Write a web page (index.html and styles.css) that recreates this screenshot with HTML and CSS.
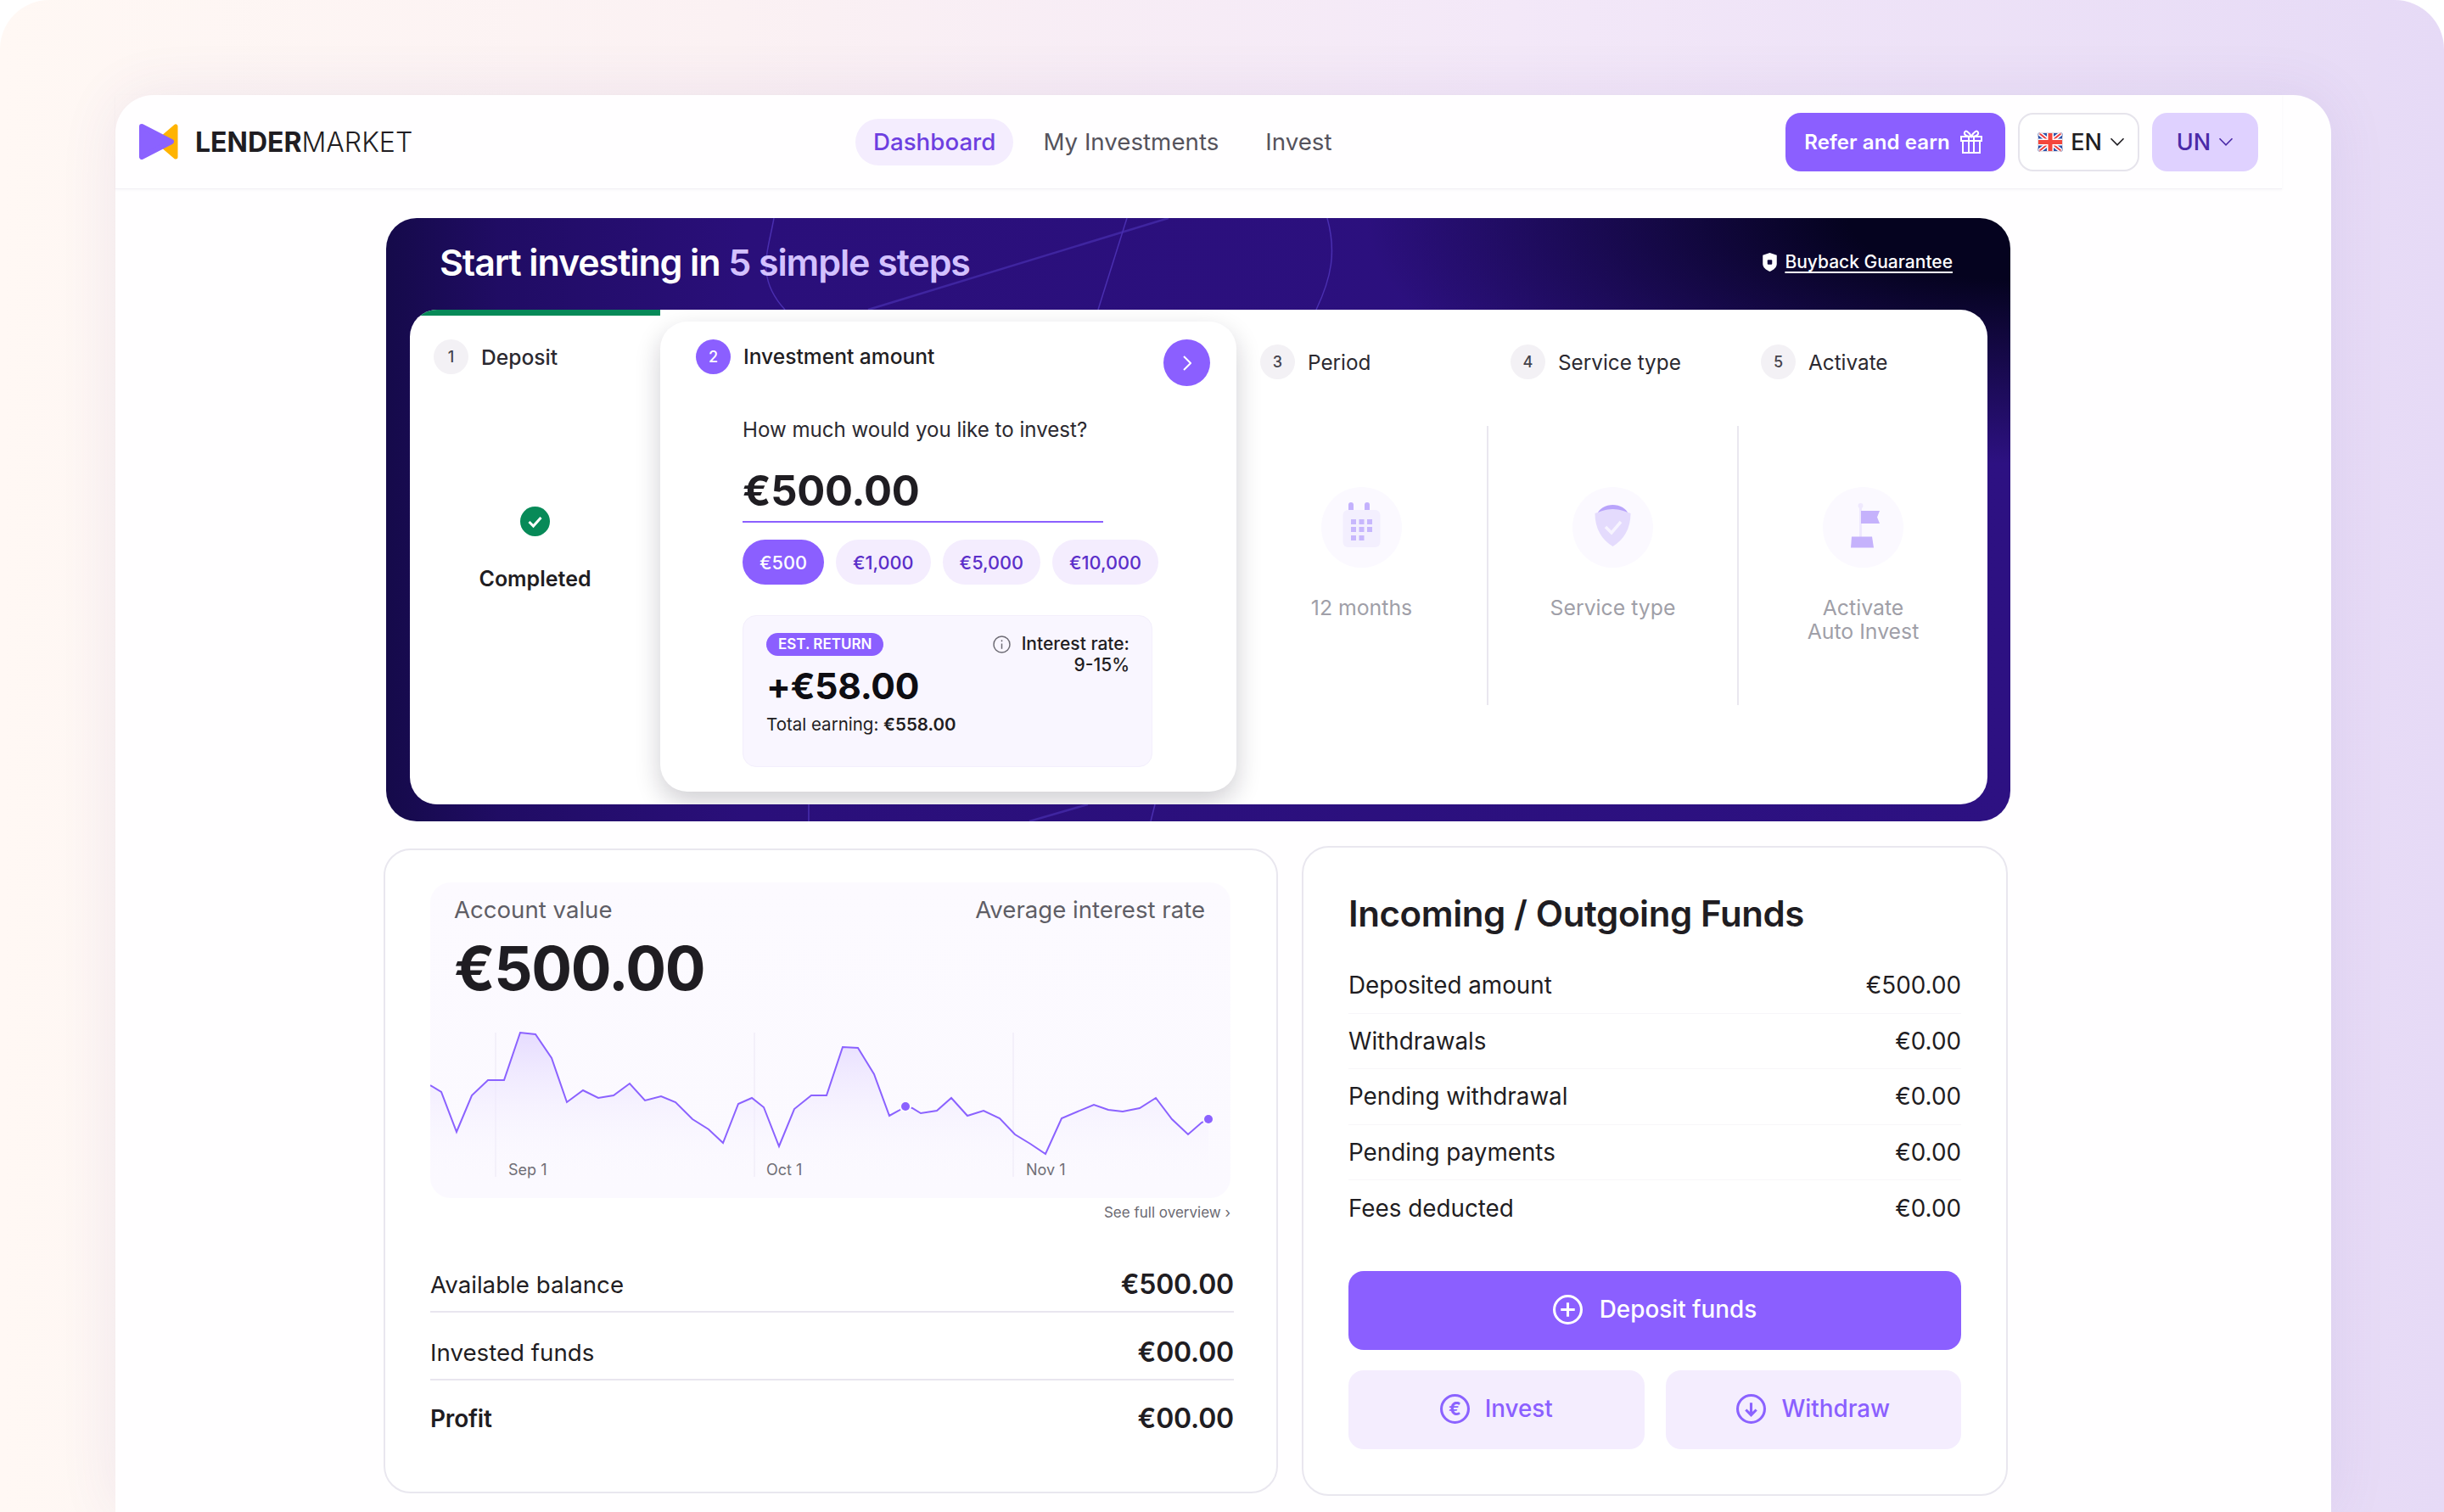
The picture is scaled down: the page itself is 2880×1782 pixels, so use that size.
FILE: index.html
```html
<!DOCTYPE html>
<html lang="en">
<head>
    <meta name="viewport" content="width=device-width, initial-scale=1.0">
    <link rel="stylesheet" href="styles.css">
    <title>Dashboard</title>
</head>

<body>
    <div class="frame">
        <div class="window">
            <header class="topbar">
                <div class="logo">
                    <svg class="logo-mark" viewBox="0 0 46 42">
                        <polygon points="43,3 43,39 22,21" fill="#ffb300" stroke="#ffb300" stroke-width="5" stroke-linejoin="round"/>
                        <polygon points="3,3 38,21 3,39" fill="#8b62ff" stroke="#8b62ff" stroke-width="6" stroke-linejoin="round"/>
                    </svg>
                    <span class="logo-text"><b>LENDER</b>MARKET</span>
                </div>
                <nav class="nav">
                    <a class="nav-link nav-active" href="#">Dashboard</a>
                    <a class="nav-link" href="#">My Investments</a>
                    <a class="nav-link nav-last" href="#">Invest</a>
                </nav>
                <div class="actions">
                    <button class="btn-refer">Refer and earn
                        <svg class="gift" viewBox="0 0 26 28" fill="none" stroke="#fff" stroke-width="2">
                            <rect x="1" y="8" width="24" height="5"/>
                            <rect x="3" y="13" width="20" height="14"/>
                            <path d="M10 8v19M16 8v19"/>
                            <path d="M13 8C10 2 6 0 5 3s3 5 8 5c5 0 9-2 8-5s-5-1-8 5z"/>
                        </svg>
                    </button>
                    <button class="btn-lang">
                        <svg class="flag" viewBox="0 0 30 23">
                            <rect width="30" height="23" rx="4" fill="#2a4fa8"/>
                            <path d="M2 1l26 21M28 1L2 22" stroke="#fff" stroke-width="5"/>
                            <path d="M2 1l26 21M28 1L2 22" stroke="#ee3d3d" stroke-width="2"/>
                            <path d="M15 0v23M0 11.5h30" stroke="#fff" stroke-width="8"/>
                            <path d="M15 0v23M0 11.5h30" stroke="#f4463c" stroke-width="5"/>
                            <rect x="0.5" y="0.5" width="29" height="22" rx="4" fill="none" stroke="#dddbe2"/>
                        </svg>
                        EN
                        <svg class="chev" viewBox="0 0 14 8" fill="none" stroke="#1f1d22" stroke-width="1.3"><path d="M1 1l6 6 6-6"/></svg>
                    </button>
                    <button class="btn-user">UN
                        <svg class="chev" viewBox="0 0 14 8" fill="none" stroke="#4a2aa8" stroke-width="1.3"><path d="M1 1l6 6 6-6"/></svg>
                    </button>
                </div>
            </header>

            <section class="hero">
                <svg class="hero-lines" viewBox="0 0 1914 711" fill="none" stroke="#4a2fb0" stroke-width="1.5">
                    <path d="M457 0C450 40 435 70 470 108"/>
                    <path d="M922 0L568 108" stroke="#3f25a0" stroke-width="2.500"/>
                    <path d="M873 0L839 108"/>
                    <path d="M1109 0C1120 40 1114 70 1096 108"/>
                    <path d="M498 691v20"/>
                    <path d="M827 691L758 711" stroke="#3f25a0" stroke-width="2.500"/>
                    <path d="M906 691l-5 20"/>
                </svg>
                <div class="hero-head">
                    <h1 class="hero-title">Start investing in <span class="hero-accent">5 simple steps</span></h1>
                    <a class="guarantee" href="#">
                        <svg class="guarantee-icon" viewBox="0 0 18 24">
                            <path d="M9 0l9 3v11c0 5-4 8-9 10-5-2-9-5-9-10V3z" fill="#fff"/>
                            <rect x="6" y="9" width="6" height="6" rx="1" fill="#120a3c"/>
                        </svg>
                        <span class="guarantee-text">Buyback Guarantee</span>
                    </a>
                </div>

                <div class="steps">
                    <div class="step step-done">
                        <div class="step-head"><span class="step-num">1</span>Deposit</div>
                        <svg class="check" viewBox="0 0 35 35">
                            <circle cx="17.5" cy="17.5" r="17.5" fill="#078a58"/>
                            <path d="M10.5 18l5 5 9-10" fill="none" stroke="#fff" stroke-width="3"/>
                        </svg>
                        <div class="completed">Completed</div>
                    </div>

                    <div class="step-card">
                        <div class="card-head">
                            <span class="step-num step-num-active">2</span>
                            <span class="card-title">Investment amount</span>
                            <button class="next">
                                <svg class="next-icon" viewBox="0 0 10 18" fill="none" stroke="#fff" stroke-width="2"><path d="M1 1l8 8-8 8"/></svg>
                            </button>
                        </div>
                        <div class="card-body">
                            <div class="question">How much would you like to invest?</div>
                            <div class="amount">€500.00</div>
                            <div class="chips">
                                <span class="chip chip-active">€500</span>
                                <span class="chip">€1,000</span>
                                <span class="chip">€5,000</span>
                                <span class="chip">€10,000</span>
                            </div>
                            <div class="return-box">
                                <div>
                                    <span class="badge">EST. RETURN</span>
                                    <div class="return-value">+€58.00</div>
                                    <div class="return-total">Total earning: <b>€558.00</b></div>
                                </div>
                                <div class="rate">
                                    <svg class="info" viewBox="0 0 20 20" fill="none" stroke="#6d6b74" stroke-width="1.4">
                                        <circle cx="10" cy="10" r="9"/>
                                        <path d="M10 9v6M10 5v2"/>
                                    </svg>
                                    Interest rate:<br>9-15%
                                </div>
                            </div>
                        </div>
                    </div>

                    <div class="step step-todo">
                        <div class="step-head"><span class="step-num">3</span>Period</div>
                        <div class="todo-body">
                            <svg class="todo-icon" viewBox="0 0 95 95">
                                <circle cx="47.5" cy="47.5" r="47.5" fill="#fbf9ff"/>
                                <rect x="32" y="18" width="6" height="14" rx="3" fill="#c4b2fd"/>
                                <rect x="51" y="18" width="6" height="14" rx="3" fill="#c4b2fd"/>
                                <rect x="25.500" y="27" width="44" height="44" rx="6" fill="#f3effe"/>
                                <g fill="#c7b7fd">
                                    <rect x="35" y="38" width="6" height="6"/><rect x="44.500" y="38" width="6" height="6"/><rect x="54" y="38" width="6" height="6"/>
                                    <rect x="35" y="47" width="6" height="6"/><rect x="44.500" y="47" width="6" height="6"/><rect x="54" y="47" width="6" height="6"/>
                                    <rect x="35" y="57" width="6" height="6"/><rect x="44.500" y="57" width="6" height="6"/>
                                </g>
                            </svg>
                            <div class="todo-text">12 months</div>
                        </div>
                    </div>

                    <div class="step step-todo">
                        <div class="step-head"><span class="step-num">4</span>Service type</div>
                        <div class="todo-body todo-line">
                            <svg class="todo-icon" viewBox="0 0 95 95">
                                <circle cx="47.5" cy="47.5" r="47.5" fill="#fbf9ff"/>
                                <path d="M28.500 33C34 17 61 17 66.500 33z" fill="#b9a4fb"/>
                                <path d="M47.500 26c8 0 15 3 21 5 0 18-8 31-21 39-13-8-21-21-21-39 6-2 13-5 21-5z" fill="#e4dbfd"/>
                                <path d="M39 47l7 7 11-13" fill="none" stroke="#f7f4ff" stroke-width="3.500"/>
                            </svg>
                            <div class="todo-text">Service type</div>
                        </div>
                    </div>

                    <div class="step step-todo">
                        <div class="step-head"><span class="step-num">5</span>Activate</div>
                        <div class="todo-body todo-line">
                            <svg class="todo-icon" viewBox="0 0 95 95">
                                <circle cx="47.5" cy="47.5" r="47.5" fill="#fbf9ff"/>
                                <rect x="43" y="22" width="3" height="38" fill="#efe9fe"/>
                                <circle cx="44.500" cy="22" r="3" fill="#efe9fe"/>
                                <path d="M45 28h22l-3 7.500 3 7.500H45z" fill="#c5b2fc"/>
                                <path d="M34 58.500h24l2 13H33z" fill="#c5b2fc"/>
                            </svg>
                            <div class="todo-text">Activate<br>Auto Invest</div>
                        </div>
                    </div>
                </div>
            </section>

            <div class="cards">
                <section class="card card-left">
                    <div class="chart-panel">
                        <div class="chart-labels">
                            <span>Account value</span>
                            <span>Average interest rate</span>
                        </div>
                        <div class="chart-value">€500.00</div>
                        <svg class="chart" viewBox="0 0 942 370">
                            <defs>
                                <linearGradient id="area" x1="0" y1="175" x2="0" y2="345" gradientUnits="userSpaceOnUse">
                                    <stop offset="0" stop-color="#e6dcff"/>
                                    <stop offset="1" stop-color="#fbf9ff" stop-opacity="0"/>
                                </linearGradient>
                            </defs>
                            <path d="M77 175v170M382 175v170M687 175v170" stroke="#f1edf9" stroke-width="1.5"/>
                            <polygon fill="url(#area)" points="0,345 0,237 13,245 31,292 49,249 68,231 87,231 106,175 124,177 143,205 161,257 180,243 198,252 216,249 235,235 253,255 272,250 289,257 309,277 328,289 345,305 363,259 379,252 393,263 411,309 429,265 449,249 467,249 486,192 504,193 523,224 541,273 552,267 560,262 568,264 578,270 597,267 614,252 633,273 652,267 671,276 689,295 707,306 725,318 744,276 782,260 799,266 816,268 836,264 855,252 874,277 893,295 909,281 917,277 917,345"/>
                            <polyline fill="none" stroke="#8b62ff" stroke-width="2" points="0,237 13,245 31,292 49,249 68,231 87,231 106,175 124,177 143,205 161,257 180,243 198,252 216,249 235,235 253,255 272,250 289,257 309,277 328,289 345,305 363,259 379,252 393,263 411,309 429,265 449,249 467,249 486,192 504,193 523,224 541,273 552,267 560,262 568,264 578,270 597,267 614,252 633,273 652,267 671,276 689,295 707,306 725,318 744,276 782,260 799,266 816,268 836,264 855,252 874,277 893,295 909,281 917,277"/>
                            <circle cx="560" cy="262" r="5" fill="#8b62ff" stroke="#fcfaff" stroke-width="4" paint-order="stroke"/>
                            <circle cx="917" cy="277" r="5" fill="#8b62ff" stroke="#fcfaff" stroke-width="4" paint-order="stroke"/>
                            <text class="tick" x="92" y="343">Sep 1</text>
                            <text class="tick" x="396" y="343">Oct 1</text>
                            <text class="tick" x="702" y="343">Nov 1</text>
                        </svg>
                    </div>
                    <a class="overview" href="#">See full overview ›</a>
                    <div class="sum-row"><span>Available balance</span><b>€500.00</b></div>
                    <div class="sum-row"><span>Invested funds</span><b>€00.00</b></div>
                    <div class="sum-row sum-last"><b>Profit</b><b>€00.00</b></div>
                </section>

                <section class="card card-right">
                    <h2 class="funds-title">Incoming / Outgoing Funds</h2>
                    <div class="fund-row"><span>Deposited amount</span><span>€500.00</span></div>
                    <div class="fund-row"><span>Withdrawals</span><span>€0.00</span></div>
                    <div class="fund-row"><span>Pending withdrawal</span><span>€0.00</span></div>
                    <div class="fund-row"><span>Pending payments</span><span>€0.00</span></div>
                    <div class="fund-row fund-last"><span>Fees deducted</span><span>€0.00</span></div>
                    <button class="btn-deposit">
                        <svg class="btn-icon" viewBox="0 0 34 34" fill="none" stroke="#fff" stroke-width="3">
                            <circle cx="17" cy="17" r="15.500"/>
                            <path d="M17 9v16M9 17h16"/>
                        </svg>
                        Deposit funds
                    </button>
                    <div class="btn-pair">
                        <button class="btn-soft">
                            <svg class="btn-icon" viewBox="0 0 34 34" fill="none" stroke="#8b62ff" stroke-width="3">
                                <circle cx="17" cy="17" r="15.500"/>
                                <text class="euro" x="17" y="24.500" text-anchor="middle">€</text>
                            </svg>
                            Invest
                        </button>
                        <button class="btn-soft">
                            <svg class="btn-icon" viewBox="0 0 34 34" fill="none" stroke="#8b62ff" stroke-width="3">
                                <circle cx="17" cy="17" r="15.500"/>
                                <path d="M17 10v13M11 18l6 6 6-6"/>
                            </svg>
                            Withdraw
                        </button>
                    </div>
                </section>
            </div>
        </div>
    </div>
</body>

</html>
```

FILE: styles.css
```css
* {
    box-sizing: border-box;
}

body {
    font-family: Inter, "Noto Sans", sans-serif;
    margin: 0;
    padding: 0;
    background-color: #fff;
    color: #1f1d22;
    overflow: hidden;
}

h1,
h2 {
    margin: 0;
}

a {
    color: inherit;
    text-decoration: none;
}

button {
    font-family: inherit;
    border: none;
    cursor: pointer;
}

.frame {
    height: 1782px;
    padding: 112px 133px 0 136px;
    border-radius: 58px 58px 0 0;
    background: linear-gradient(90deg, #fff8f4 0%, #fbf1f3 30%, #f3e8f8 62%, #e6daf6 100%);
    overflow: hidden;
}

.window {
    height: 1670px;
    background-color: #fffeff;
    border-radius: 45px 45px 0 0;
    box-shadow: 0 0 70px rgba(90, 50, 150, 0.09);
}

/* top bar */
.topbar {
    display: flex;
    align-items: center;
    width: 2553px;
    height: 111px;
    padding: 0 28px 0 28px;
    border-bottom: 1px solid #f2f0f5;
    box-shadow: 0 1px 3px rgba(60, 40, 100, 0.04);
}

.logo {
    display: flex;
    align-items: center;
    width: 844px;
}

.logo-mark {
    width: 46px;
    height: 42px;
    margin-right: 20px;
}

.logo-text {
    font-size: 32px;
    font-weight: 300;
}

.logo-text b {
    font-weight: 700;
}

.nav {
    display: flex;
    align-items: center;
    gap: 35px;
}

.nav-link {
    font-size: 27.7px;
    color: #55535c;
    line-height: 55px;
}

.nav-last {
    margin-left: 20px;
}

.nav-active {
    padding: 0 21px;
    border-radius: 28px;
    color: #6d3fe0;
    font-weight: 500;
    background-color: #f4edfe;
}

.actions {
    display: flex;
    align-items: center;
    gap: 15px;
    margin-left: auto;
}

.btn-refer {
    display: flex;
    align-items: center;
    justify-content: center;
    gap: 12px;
    width: 259px;
    height: 69px;
    padding: 0 5px 0 0;
    border-radius: 18px;
    font-size: 24px;
    font-weight: 600;
    letter-spacing: 0.1px;
    color: #fff;
    background-color: #8b5fff;
}

.gift {
    width: 26px;
    height: 28px;
}

.btn-lang {
    display: flex;
    align-items: center;
    justify-content: center;
    gap: 9px;
    width: 143px;
    height: 69px;
    padding: 0 0 0 6px;
    border: 2px solid #e6e4ec;
    border-radius: 18px;
    font-size: 27px;
    font-weight: 500;
    color: #1f1d22;
    background-color: #fff;
}

.flag {
    width: 30px;
    height: 23px;
}

.chev {
    width: 18px;
    height: 10px;
}

.btn-user {
    display: flex;
    align-items: center;
    justify-content: center;
    gap: 9px;
    width: 125px;
    height: 69px;
    padding: 0;
    border-radius: 18px;
    font-size: 27px;
    font-weight: 500;
    color: #4a2aa8;
    background-color: #dfd1ff;
}

/* hero */
.hero {
    position: relative;
    width: 1914px;
    height: 711px;
    margin: 34px 0 0 319px;
    border-radius: 36px;
    background:
        radial-gradient(ellipse 760px 290px at 100% 0, #05031f 0%, #05031f 25%, rgba(5, 3, 31, 0) 100%),
        linear-gradient(90deg, #150a4a 0%, #200c64 7%, #2a0f7a 22%, #2d1182 100%);
    overflow: hidden;
}

.hero-lines {
    position: absolute;
    left: 0;
    top: 0;
    width: 1914px;
    height: 711px;
}

.hero-head {
    position: relative;
    display: flex;
    align-items: center;
    justify-content: space-between;
    height: 108px;
    padding: 0 68px 5px 63px;
}

.hero-title {
    font-size: 43px;
    font-weight: 600;
    letter-spacing: -1.1px;
    color: #fff;
}

.hero-accent {
    color: #d3c1ff;
}

.guarantee {
    display: flex;
    align-items: center;
    gap: 9px;
    color: #fff;
    font-size: 21px;
    font-weight: 500;
}

.guarantee-icon {
    width: 17px;
    height: 22px;
}

.guarantee-text {
    text-decoration: underline;
    text-underline-offset: 4px;
}

.steps {
    position: relative;
    display: flex;
    width: 1859px;
    height: 583px;
    margin-left: 28px;
    border-radius: 32px;
    background-color: #fff;
    overflow: hidden;
}

.step {
    flex: 1;
}

.step-done {
    flex: 0 0 295px;
    padding-top: 28px;
    border-top: 7px solid #078a58;
    text-align: center;
}

.step-head {
    display: flex;
    align-items: center;
    height: 41px;
    padding-left: 28px;
    font-size: 24.6px;
    font-weight: 500;
    color: #2b2930;
}

.step-todo .step-head {
    margin-top: 41px;
    font-size: 24.3px;
    font-weight: 400;
}

.step-num {
    display: flex;
    align-items: center;
    justify-content: center;
    flex: none;
    width: 41px;
    height: 41px;
    margin-right: 15px;
    border-radius: 50%;
    font-size: 18px;
    font-weight: 500;
    color: #45434c;
    background-color: #f3f1f5;
}

.step-num-active {
    color: #fff;
    background-color: #8b5fff;
}

.check {
    display: block;
    width: 35px;
    height: 35px;
    margin: 156px auto 0;
}

.completed {
    margin-top: 33px;
    font-size: 25px;
    line-height: 34px;
    font-weight: 600;
}

.step-card {
    flex: 0 0 679px;
    height: 554px;
    margin-top: 14px;
    border-radius: 32px;
    background-color: #fff;
    box-shadow: 0 12px 30px rgba(20, 15, 35, 0.2);
    z-index: 1;
}

.card-head {
    display: flex;
    align-items: flex-start;
    padding: 21px 31px 0 42px;
}

.card-title {
    line-height: 41px;
    font-size: 24.6px;
    font-weight: 500;
}

.next {
    display: flex;
    align-items: center;
    justify-content: center;
    width: 55px;
    height: 55px;
    margin: 0 0 0 auto;
    padding: 0;
    border-radius: 50%;
    background-color: #8b5fff;
}

.next-icon {
    width: 10px;
    height: 18px;
}

.card-body {
    padding-left: 97px;
    margin-top: 36px;
}

.question {
    font-size: 24.1px;
    line-height: 32px;
    color: #2b2930;
}

.amount {
    width: 425px;
    margin-top: 20px;
    font-size: 49px;
    line-height: 71px;
    font-weight: 700;
    letter-spacing: -0.3px;
    border-bottom: 2px solid #8b5fff;
}

.chips {
    display: flex;
    gap: 14px;
    margin-top: 20px;
}

.chip {
    display: flex;
    align-items: center;
    height: 53px;
    padding: 0 20px;
    border-radius: 27px;
    font-size: 21.7px;
    font-weight: 500;
    color: #5b2fc9;
    background-color: #f4edfe;
}

.chip-active {
    color: #fff;
    background-color: #8b5fff;
}

.return-box {
    display: flex;
    justify-content: space-between;
    width: 483px;
    height: 179px;
    margin-top: 36px;
    padding: 20px 26px 0 27px;
    border-radius: 16px;
    border: 1px solid #f3effc;
    background-color: #f9f6ff;
}

.badge {
    display: inline-block;
    height: 27px;
    padding: 0 14px;
    line-height: 27px;
    border-radius: 14px;
    font-size: 17px;
    font-weight: 600;
    color: #fff;
    background-color: #8b5fff;
}

.return-value {
    margin-top: 6px;
    font-size: 42.500px;
    line-height: 60px;
    font-weight: 700;
    letter-spacing: -0.3px;
    color: #0e0d12;
}

.return-total {
    font-size: 20.5px;
    line-height: 30px;
}

.return-total b {
    font-weight: 600;
}

.rate {
    font-size: 21px;
    line-height: 25px;
    font-weight: 500;
    text-align: right;
}

.info {
    display: inline-block;
    width: 21px;
    height: 21px;
    margin-right: 7px;
    vertical-align: -4px;
}

.todo-body {
    display: flex;
    flex-direction: column;
    align-items: center;
    height: 329px;
    margin-top: 55px;
    padding-top: 72px;
    font-size: 24.8px;
}

.todo-line {
    border-left: 2px solid #e9e7ef;
}

.todo-icon {
    width: 95px;
    height: 95px;
}

.todo-text {
    margin-top: 33px;
    line-height: 28px;
    text-align: center;
    color: #a09fa8;
}

/* bottom cards */
.cards {
    display: flex;
    align-items: flex-start;
    margin: 29px 0 0 316px;
}

.card {
    border: 2px solid #e9e7ef;
    border-radius: 32px;
    background-color: #fff;
}

.card-left {
    width: 1054px;
    height: 760px;
    margin-top: 3px;
    padding: 38px 50px 0 53px;
}

.chart-panel {
    position: relative;
    width: 943px;
    height: 372px;
    border-radius: 24px;
    background: linear-gradient(180deg, #fcfaff 0%, #fbf9ff 100%);
}

.chart {
    position: absolute;
    left: 0;
    top: 2px;
    width: 942px;
    height: 370px;
}

.tick {
    font-family: Inter, sans-serif;
    font-size: 18px;
    fill: #6f6e76;
}

.chart-labels {
    position: relative;
    display: flex;
    justify-content: space-between;
    padding: 15px 30px 0 28px;
    font-size: 27.6px;
    line-height: 34px;
    color: #5f5e66;
}

.chart-value {
    position: relative;
    margin: 8px 0 0 28px;
    font-size: 71px;
    line-height: 88px;
    font-weight: 700;
    letter-spacing: -1.4px;
}

.overview {
    display: block;
    width: 943px;
    margin-top: 4px;
    line-height: 26px;
    font-size: 17px;
    text-align: right;
    color: #6b6a72;
}

.sum-row {
    display: flex;
    justify-content: space-between;
    width: 947px;
    padding: 27px 0 11px;
    line-height: 40px;
    font-size: 27.7px;
    border-bottom: 2px solid #e8e6ef;
}

.overview + .sum-row {
    margin-top: 25px;
}

.sum-row b {
    font-size: 32px;
    font-weight: 600;
    letter-spacing: -0.2px;
}

.sum-last {
    padding-top: 25px;
    border-bottom: none;
}

.sum-last b:first-child {
    font-size: 28px;
}

.card-right {
    width: 832px;
    height: 766px;
    margin-left: 28px;
    padding: 50px 53px 0;
}

.funds-title {
    font-size: 42px;
    line-height: 56px;
    font-weight: 600;
    letter-spacing: -0.4px;
}

.fund-row {
    display: flex;
    justify-content: space-between;
    align-items: center;
    height: 65.500px;
    font-size: 27.8px;
    border-bottom: 1px solid #f7f6f9;
}

.funds-title + .fund-row {
    margin-top: 24px;
}

.fund-last {
    border-bottom: none;
}

.btn-deposit,
.btn-soft {
    display: flex;
    align-items: center;
    justify-content: center;
    gap: 20px;
    height: 93px;
    padding: 0 0 2px;
    border-radius: 18px;
    font-size: 27.8px;
    font-weight: 500;
}

.btn-deposit {
    width: 722px;
    margin-top: 41px;
    color: #fff;
    background-color: #8b5fff;
}

.btn-pair {
    display: flex;
    gap: 25px;
    margin-top: 24px;
}

.btn-soft {
    flex: 1;
    gap: 18px;
    color: #8b5fff;
    background-color: #f4edfe;
}

.btn-icon {
    width: 35px;
    height: 35px;
}

.euro {
    font-family: Inter, sans-serif;
    font-size: 21px;
    font-weight: 700;
    fill: #8b62ff;
    stroke: none;
}
```
